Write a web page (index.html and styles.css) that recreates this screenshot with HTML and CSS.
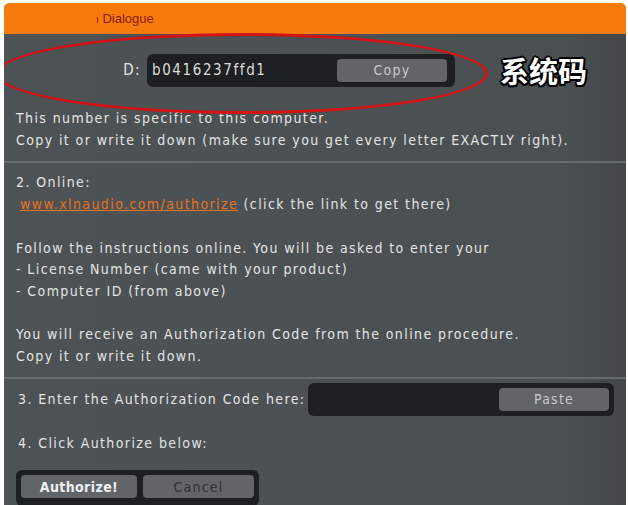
FILE: index.html
```html
<!DOCTYPE html>
<html lang="en">
<head>
  <meta charset="UTF-8">
  <title>Dialogue</title>
  <link rel="stylesheet" href="styles.css">
</head>
<body>

<div class="window">
  <!-- title bar -->
  <div class="titlebar"><span class="tick">ı</span> Dialogue</div>

  <!-- computer id row -->
  <div class="id-row">
    <span class="id-label">D:</span>
    <div class="field id-field">
      <span class="id-value">b0416237ffd1</span>
      <button class="btn">Copy</button>
    </div>
    <span class="note">系统码</span>
    <div class="ellipse"></div>
  </div>

  <div class="section first">
    <p>This number is specific to this computer.</p>
    <p>Copy it or write it down (make sure you get every letter EXACTLY right).</p>
  </div>

  <div class="section">
    <p>2. Online:</p>
    <p class="link-line"><a href="#">www.xlnaudio.com/authorize</a> (click the link to get there)</p>
    <p>&nbsp;</p>
    <p>Follow the instructions online. You will be asked to enter your</p>
    <p>- License Number (came with your product)</p>
    <p>- Computer ID (from above)</p>
    <p>&nbsp;</p>
    <p>You will receive an Authorization Code from the online procedure.</p>
    <p>Copy it or write it down.</p>
  </div>

  <div class="section last">
    <div class="code-row">
      <span>3. Enter the Authorization Code here:</span>
      <div class="field code-field">
        <button class="btn">Paste</button>
      </div>
    </div>
    <p class="step4">4. Click Authorize below:</p>
    <div class="actions">
      <button class="btn strong">Authorize!</button>
      <button class="btn dim">Cancel</button>
    </div>
  </div>
</div>

</body>
</html>
```

FILE: styles.css
```css
body {
  margin: 0;
  background-color: #ffffff;
  font-family: "DejaVu Sans Condensed", "DejaVu Sans", sans-serif;
  overflow: hidden;
}

.window {
  margin: 3px 2px 0 4px;
  height: 502px;
  background: linear-gradient(90deg, #4d5255 0%, #4a4f52 90%, #43474a 100%);
  border-radius: 6px 6px 0 0;
  overflow: hidden;
  color: #e4e4e4;
  font-size: 14px;
  letter-spacing: 1.4px;
}

/* 타이틀 바 */
.titlebar {
  height: 31px;
  line-height: 31px;
  background-color: #f77a0c;
  color: #8a1a10;
  font-family: "Liberation Sans", Arial, sans-serif;
  font-size: 13px;
  letter-spacing: 0;
  padding-left: 92px;
}

.tick {
  font-size: 10px;
}

.id-row {
  position: relative;
  display: flex;
  align-items: center;
  height: 72px;
}

.id-label {
  width: 137px;
  text-align: right;
  margin-right: 6px;
  font-size: 15px;
}

.field {
  display: flex;
  align-items: center;
  background-color: #1e1f20;
  border-radius: 6px;
  height: 33px;
  box-sizing: border-box;
}

.id-field {
  width: 308px;
  padding: 0 8px 0 5px;
  justify-content: space-between;
}

.id-value {
  font-size: 15px;
  letter-spacing: 1.6px;
  color: #dcdcdc;
}

.btn {
  width: 110px;
  height: 23px;
  border: none;
  border-radius: 4px;
  background-color: #616568;
  color: #c6c8ca;
  font-family: inherit;
  font-size: 14px;
  letter-spacing: 1.2px;
  padding: 0;
}

.note {
  margin-left: 45px;
  font-family: "Noto Sans CJK SC", sans-serif;
  font-size: 29px;
  font-weight: bold;
  letter-spacing: 0;
  color: #ffffff;
  text-shadow: 2px 0 0 #000, -2px 0 0 #000, 0 2px 0 #000, 0 -2px 0 #000,
    1.5px 1.5px 0 #000, -1.5px -1.5px 0 #000, 1.5px -1.5px 0 #000, -1.5px 1.5px 0 #000;
}

/* 빨간 동그라미 표시 */
.ellipse {
  position: absolute;
  left: -8px;
  top: -1px;
  width: 486px;
  height: 75px;
  border: 3px solid #d41414;
  border-radius: 50%;
  pointer-events: none;
}

.section {
  padding: 0 12px;
  border-bottom: 2px solid #676c6f;
}

.section p {
  margin: 0;
  line-height: 21.7px;
  white-space: nowrap;
}

.section.first {
  padding-top: 2px;
  padding-bottom: 10px;
}

.section:not(.first):not(.last) {
  padding-top: 9px;
  padding-bottom: 9px;
}

.section.last {
  border-bottom: none;
}

.link-line a {
  margin-left: 4px;
  color: #e8731e;
}

.code-row {
  display: flex;
  align-items: center;
  justify-content: space-between;
  margin-top: 4px;
  padding-left: 2px;
}

.code-field {
  width: 306px;
  justify-content: flex-end;
  padding-right: 5px;
}

.step4 {
  margin-top: 17px !important;
  padding-left: 2px;
}

.actions {
  display: inline-flex;
  gap: 6px;
  margin-top: 16px;
  padding: 5px 5px 8px;
  background-color: #1e1f20;
  border-radius: 6px;
}

.btn.strong {
  width: 116px;
  color: #f0f0f0;
  font-weight: bold;
  letter-spacing: 0.4px;
}

.btn.dim {
  width: 111px;
  color: #2e3133;
}
```
